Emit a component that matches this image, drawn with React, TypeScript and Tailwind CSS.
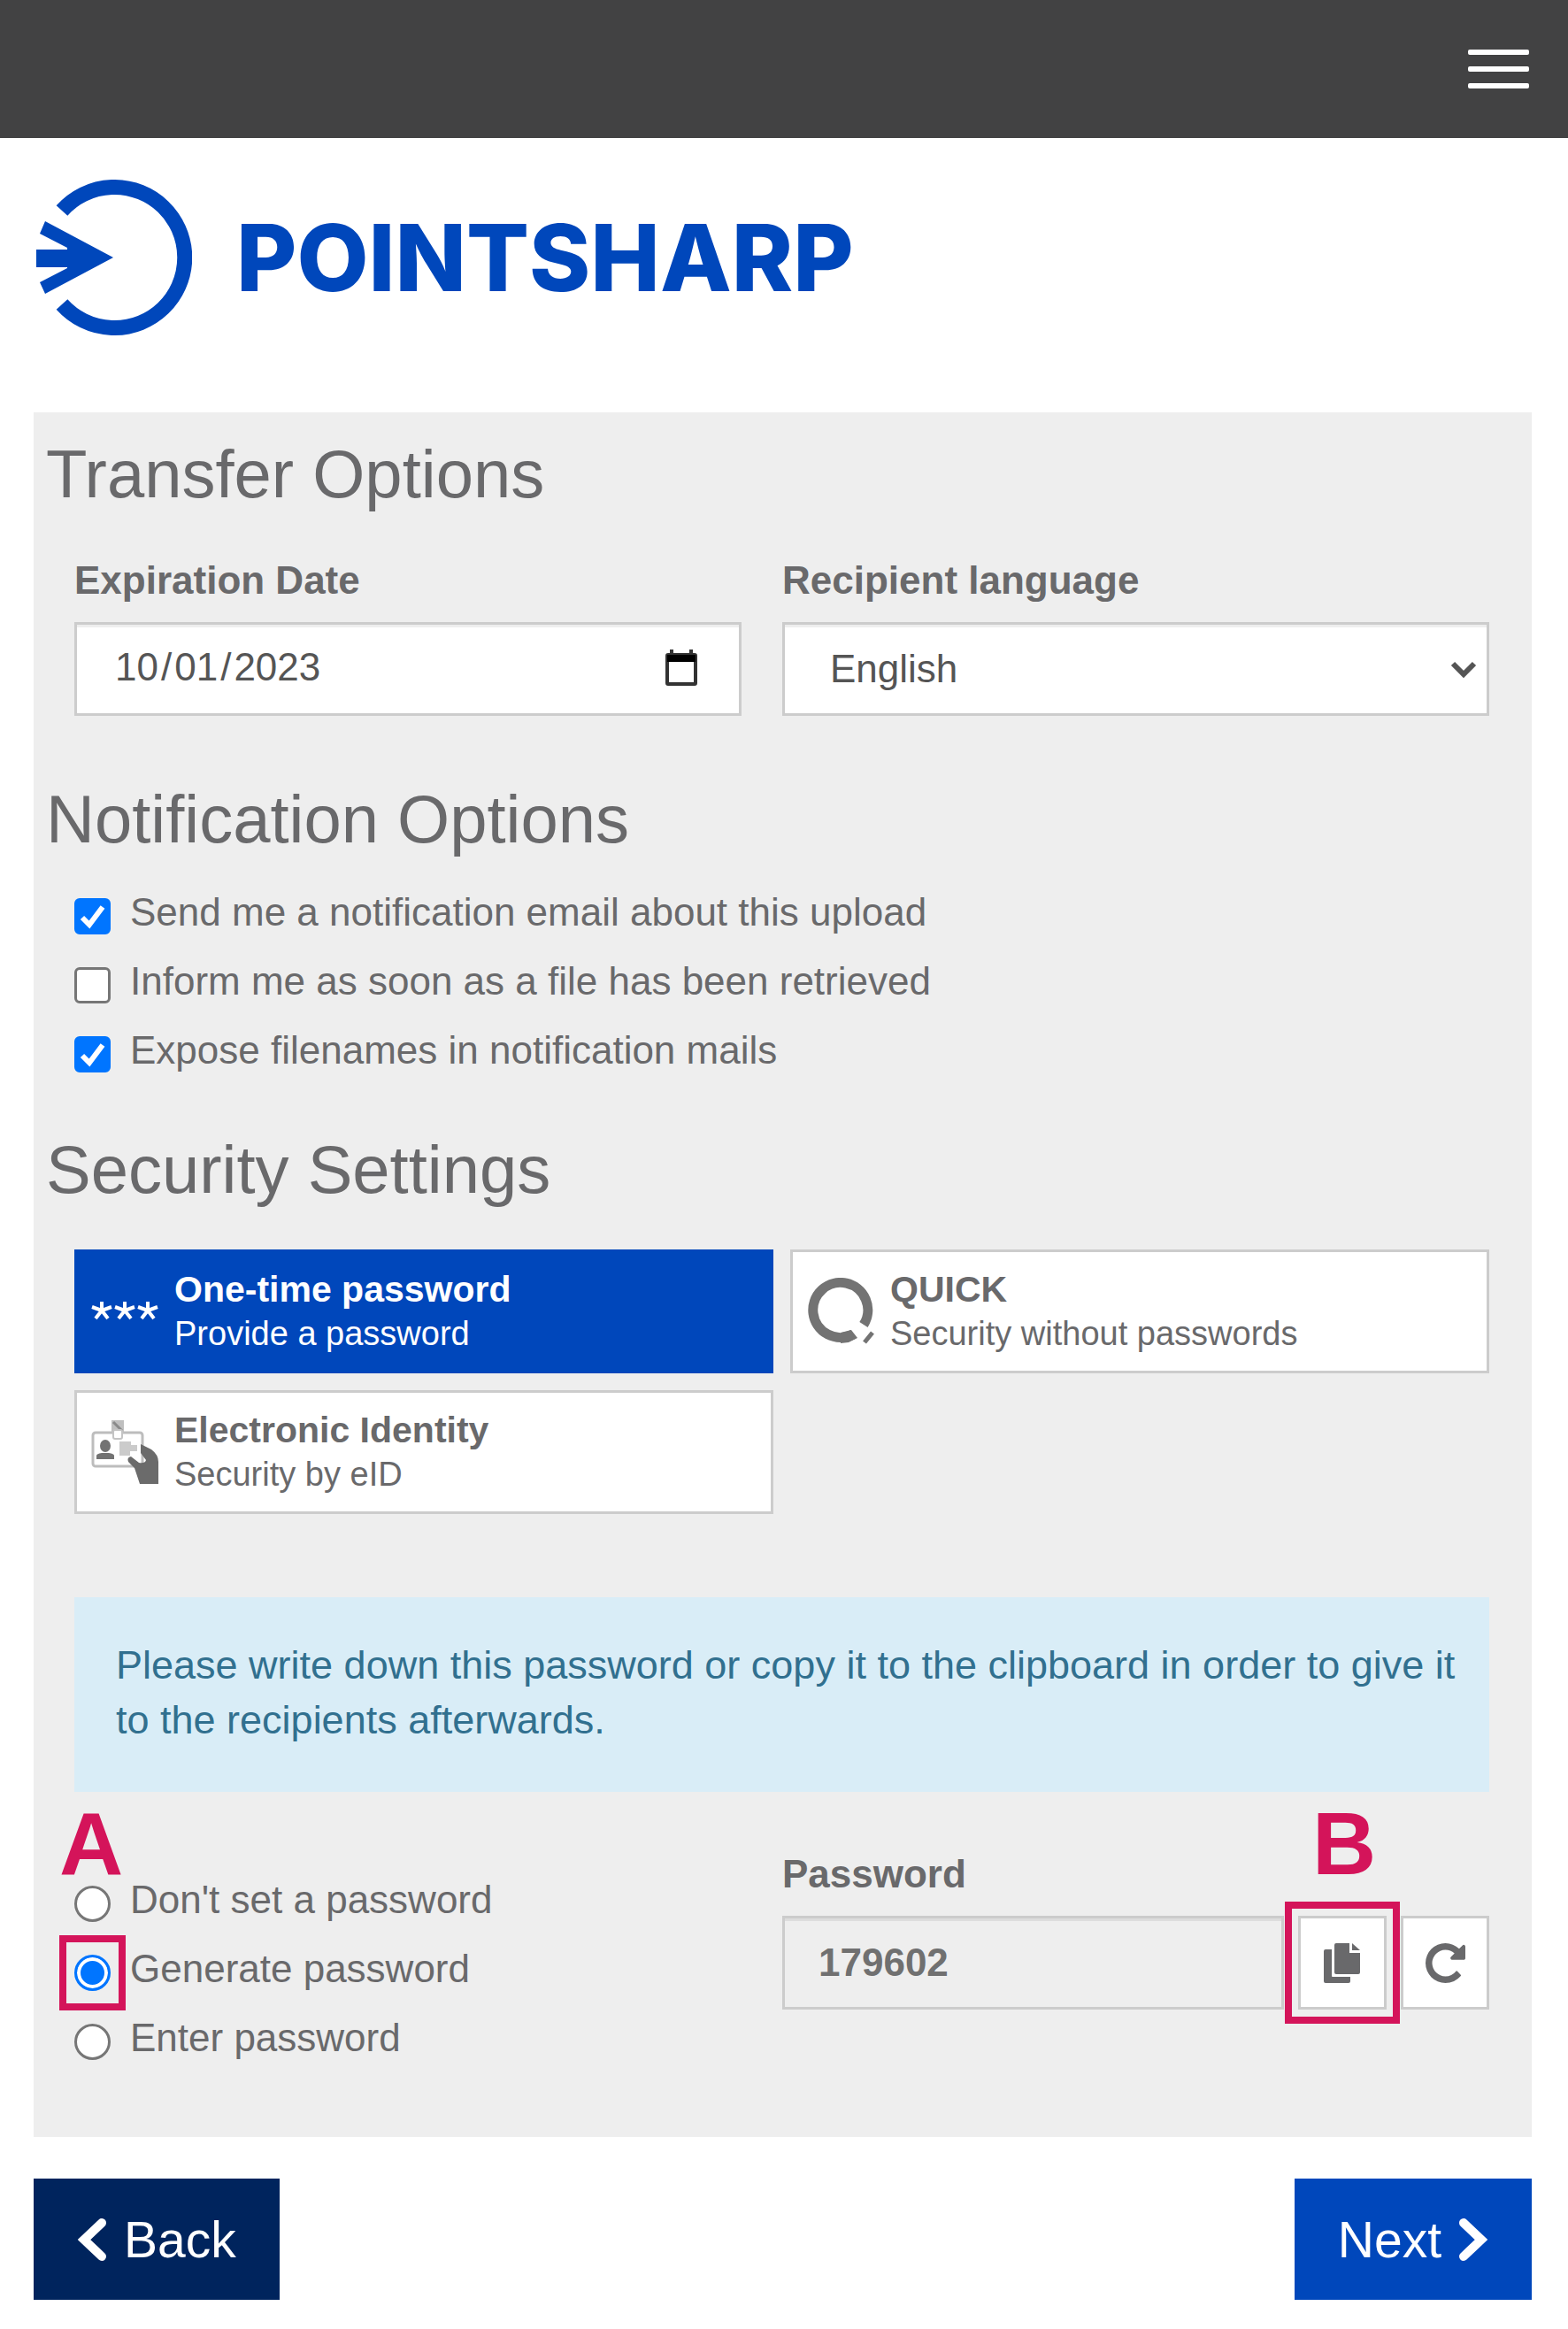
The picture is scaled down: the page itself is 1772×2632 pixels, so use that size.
import { useState } from "react";

const notifications = [
  { id: "notify-upload", label: "Send me a notification email about this upload", on: true },
  { id: "notify-retrieved", label: "Inform me as soon as a file has been retrieved", on: false },
  { id: "expose-filenames", label: "Expose filenames in notification mails", on: true },
];

const methods = [
  { id: "otp", title: "One-time password", text: "Provide a password", Icon: StarsIcon },
  { id: "quick", title: "QUICK", text: "Security without passwords", Icon: QuickIcon },
  { id: "eid", title: "Electronic Identity", text: "Security by eID", Icon: EidIcon },
];

const passwordModes = [
  { id: "none", label: "Don't set a password" },
  { id: "generate", label: "Generate password" },
  { id: "enter", label: "Enter password" },
];

function LogoMark() {
  return (
    <svg viewBox="0 0 176 176" className="w-[176px] h-[176px] shrink-0" fill="none" aria-hidden="true">
      <path d="M29 35 A79.500 79.500 0 1 1 29 141" stroke="#0047bb" strokeWidth="17" />
      <path
        d="M10 47 L87 88 L10 129 L4 116 L35 100 V99 H0 V79 H35 V77 L4 61 Z"
        fill="#0047bb"
      />
    </svg>
  );
}

function StarsIcon() {
  return (
    <svg viewBox="0 0 76 76" className="w-[76px] h-[76px]" stroke="currentColor" strokeWidth="4" fill="none" aria-hidden="true">
      {[12, 38, 64].map((x) => (
        <path key={x} d={`M${x} 37V27M${x} 37L${x - 11} 33M${x} 37L${x + 11} 33M${x} 37L${x - 7} 46M${x} 37L${x + 7} 46`} />
      ))}
    </svg>
  );
}

function QuickIcon() {
  return (
    <svg viewBox="0 0 76 76" className="w-[76px] h-[76px]" fill="none" aria-hidden="true">
      <path d="M64 53 A31 31 0 1 0 52 64" stroke="#737373" strokeWidth="11" />
      <path d="M38 62 L50 59 L57 68 L47 73 L38 74 Z" fill="#737373" />
      <path d="M74 62 L65 73" stroke="#737373" strokeWidth="5" />
    </svg>
  );
}

function EidIcon() {
  return (
    <svg viewBox="0 0 76 76" className="w-[76px] h-[76px]" fill="none" aria-hidden="true">
      <rect x="2" y="16" width="56" height="38" rx="3" stroke="#bdbdbd" strokeWidth="3" />
      <rect x="23" y="2" width="14" height="14" fill="#bfbfbf" />
      <path d="M25 4l10 10" stroke="#8a8a8a" strokeWidth="3" />
      <rect x="25" y="13" width="10" height="10" rx="2" fill="#fff" stroke="#c4c4c4" strokeWidth="2" />
      <ellipse cx="16" cy="31" rx="6" ry="7" fill="#737373" />
      <path d="M6 46V42q0-2 6-3h8q6 1 6 3v4z" fill="#737373" />
      <path d="M32 26h13v4h7v7H44v5H32z" fill="#cbcbcb" />
      <path d="M56 29l12 6q8 6 8 14v25H55L49 56 42 49q-2-5 3-6l9 7q7 1 8-3l-6-8z" fill="#6b6b6b" />
    </svg>
  );
}

function CalendarIcon() {
  return (
    <svg viewBox="0 0 36 41" className="w-[36px] h-[41px]" aria-hidden="true">
      <path d="M7 0v7M29 0v7" stroke="#333" strokeWidth="4" />
      <rect x="2" y="6" width="32" height="33" rx="1" fill="none" stroke="#333" strokeWidth="4" />
      <path d="M2 6h32v8H2z" fill="#000" />
    </svg>
  );
}

function ChevronDown() {
  return (
    <svg viewBox="0 0 30 20" className="w-[30px] h-[20px]" fill="none" aria-hidden="true">
      <path d="M3 3l12 12L27 3" stroke="#555" strokeWidth="6" />
    </svg>
  );
}

function CopyIcon() {
  return (
    <svg viewBox="0 0 44 46" className="w-[44px] h-[46px]" fill="currentColor" aria-hidden="true">
      <path d="M3 8h7v30q0 1 1 1h20v5q0 2-2 2H3q-2 0-2-2V10q0-2 2-2z" />
      <path d="M15 1h15v11h12v22q0 2-2 2H15q-2 0-2-2V3q0-2 2-2z" />
      <path d="M33 1l9 8h-9z" />
    </svg>
  );
}

function RepeatIcon() {
  return (
    <svg viewBox="0 128 1536 1536" className="w-[45px] h-[45px]" fill="currentColor" aria-hidden="true">
      <path d="M1536 256v448q0 26-19 45t-45 19h-448q-42 0-59-40-17-39 14-69l138-138q-148-137-349-137-104 0-198.500 40.500t-163.500 109.500-109.500 163.500-40.500 198.500 40.500 198.500 109.500 163.500 163.500 109.500 198.500 40.500q119 0 225-52t179-147q7-10 23-12 15 0 25 9l137 138q9 8 9.500 20.500t-7.500 22.500q-109 132-264 204.500t-327 72.500q-156 0-298-61t-245-164-164-245-61-298 61-298 164-245 245-164 298-61q147 0 284.500 55.500t244.500 156.500l130-129q29-31 70-14 39 17 39 59z" />
    </svg>
  );
}

function Arrow({ left = false }: { left?: boolean }) {
  return (
    <svg viewBox="0 0 34 50" className="w-[34px] h-[50px]" fill="none" aria-hidden="true">
      <path
        d={left ? "M28 6L8 25l20 19" : "M6 6l20 19L6 44"}
        stroke="currentColor"
        strokeWidth="10"
        strokeLinecap="round"
      />
    </svg>
  );
}

function Heading({ children }: { children: string }) {
  return <h2 className="pl-[14px] text-[76px] leading-[84px]">{children}</h2>;
}

export default function App() {
  const [checked, setChecked] = useState(notifications.map((n) => n.on));
  const [method, setMethod] = useState("otp");
  const [mode, setMode] = useState("generate");
  const [date, setDate] = useState("2023-10-01");

  return (
    <div
      className="bg-white text-[#69696b] text-[44px] leading-[62px]"
      style={{ fontFamily: '"Liberation Sans", Arial, sans-serif' }}
    >
      <header className="h-[156px] bg-[#424243] flex items-center justify-end pr-[44px]">
        <button aria-label="Open menu" className="flex flex-col gap-[13px] w-[69px]">
          <span className="block h-[6px] w-full rounded-[2px] bg-white" />
          <span className="block h-[6px] w-full rounded-[2px] bg-white" />
          <span className="block h-[6px] w-full rounded-[2px] bg-white" />
        </button>
      </header>

      <main className="pl-[38px] pr-[41px] pt-[47px] pb-[32px]">
        {/* Brand */}
        <a href="#" className="flex items-center pl-[3px]">
          <LogoMark />
          <span
            className="pl-[50px] text-[105px] leading-[176px] font-extrabold text-[#0047bb]"
            style={{ fontFamily: "Inter, sans-serif" }}
          >
            POINTSHARP
          </span>
        </a>

        <div className="mt-[87px] bg-[#eee] pt-[28px] pb-[81px]">
          <Heading>Transfer Options</Heading>
          <div className="grid grid-cols-[754fr_799fr] gap-[46px] pl-[46px] pr-[48px] mt-[47px]">
            <div className="min-w-0">
              <label htmlFor="expires" className="block font-bold">Expiration Date</label>
              <div className="relative mt-[16px]">
                <input
                  id="expires"
                  type="date"
                  value={date}
                  onChange={(e) => setDate(e.target.value)}
                  className="block w-full h-[106px] pl-[42px] pr-[48px] pb-[4px] bg-white border-[3px] border-[#ccc] shadow-[inset_0_3px_0_#eee] text-[#555] [&::-webkit-calendar-picker-indicator]:opacity-0 [&::-webkit-datetime-edit-text]:px-[2px]"
                />
                <span className="absolute right-[50px] top-[31px] pointer-events-none">
                  <CalendarIcon />
                </span>
              </div>
            </div>
            <div className="min-w-0">
              <label htmlFor="language" className="block font-bold">Recipient language</label>
              <div className="relative mt-[16px]">
                <select
                  id="language"
                  className="block w-full h-[106px] pl-[51px] pr-[60px] appearance-none bg-white border-[3px] border-[#ccc] shadow-[inset_0_3px_0_#eee] text-[#555]"
                >
                  <option>English</option>
                  <option>German</option>
                </select>
                <span className="absolute right-[14px] top-[44px] pointer-events-none">
                  <ChevronDown />
                </span>
              </div>
            </div>
          </div>

          <div className="mt-[75px]">
            <Heading>Notification Options</Heading>
            <div className="flex flex-col gap-[16px] pl-[46px] mt-[32px]">
              {notifications.map((n, i) => (
                <label key={n.id} htmlFor={n.id} className="flex items-start gap-[22px]">
                  <span className="relative mt-[15px] shrink-0">
                    <input
                      id={n.id}
                      type="checkbox"
                      checked={checked[i]}
                      onChange={() => setChecked(checked.map((c, j) => (j === i ? !c : c)))}
                      className="block w-[41px] h-[41px] appearance-none rounded-[6px] border-[3px] border-[#767676] bg-white checked:border-[#0075ff] checked:bg-[#0075ff]"
                    />
                    {checked[i] && (
                      <svg viewBox="0 0 41 41" className="absolute inset-0 w-[41px] h-[41px] pointer-events-none" fill="none">
                        <path d="M9 22l8 8L32 10" stroke="#fff" strokeWidth="6" />
                      </svg>
                    )}
                  </span>
                  {n.label}
                </label>
              ))}
            </div>
          </div>

          <div className="mt-[62px]">
            <Heading>Security Settings</Heading>
            <div className="grid grid-cols-2 gap-[19px] pl-[46px] pr-[48px] mt-[48px]">
              {methods.map(({ id, title, text, Icon }) => (
                <button
                  key={id}
                  onClick={() => setMethod(id)}
                  aria-pressed={method === id}
                  className={`flex items-center gap-[18px] h-[140px] pl-[16px] border-[3px] text-left ${
                    method === id ? "bg-[#0047bb] border-[#0047bb] text-white" : "bg-white border-[#ccc]"
                  }`}
                >
                  <Icon />
                  <span className="flex flex-col">
                    <span className="text-[41px] leading-[50px] font-bold">{title}</span>
                    <span className="text-[38px] leading-[50px]">{text}</span>
                  </span>
                </button>
              ))}
            </div>
          </div>

          <div className="pl-[46px] pr-[48px]">
            <p role="status" className="mt-[94px] bg-[#d9edf7] text-[#31708f] text-[45px] pl-[47px] pr-[20px] pt-[46px] pb-[50px]">
              Please write down this password or copy it to the clipboard in order to give it to the recipients afterwards.
            </p>

            <div className="grid grid-cols-[754fr_799fr] gap-[46px] mt-[62px]">
              <div className="min-w-0 flex flex-col gap-[16px] pt-[29px]">
                {passwordModes.map((m) => (
                  <label key={m.id} htmlFor={m.id} className="flex items-start gap-[22px]">
                    <span className="relative mt-[15px] shrink-0">
                      <input
                        id={m.id}
                        type="radio"
                        name="password-mode"
                        checked={mode === m.id}
                        onChange={() => setMode(m.id)}
                        className="block w-[41px] h-[41px] appearance-none rounded-full border-[3px] border-[#767676] bg-white checked:border-[#0075ff] checked:bg-[#0075ff] checked:shadow-[inset_0_0_0_4px_#fff]"
                      />
                      {m.id === "none" && (
                        <span className="absolute left-[-17px] top-[-97px] text-[100px] leading-[100px] font-bold text-[#d4145a]">A</span>
                      )}
                      {m.id === "generate" && (
                        <span className="absolute inset-x-[-17px] inset-y-[-22px] border-[8px] border-[#d4145a] pointer-events-none" />
                      )}
                    </span>
                    {m.label}
                  </label>
                ))}
              </div>

              <div className="min-w-0">
                <label htmlFor="password" className="block font-bold">Password</label>
                <div className="flex mt-[16px]">
                  <input
                    id="password"
                    type="text"
                    readOnly
                    value="179602"
                    className="flex-1 min-w-0 h-[106px] pl-[38px] bg-[#eee] border-[3px] border-[#ccc] shadow-[inset_0_3px_0_#ddd] font-bold text-[#707070]"
                  />
                  <div className="relative ml-[16px]">
                    <button
                      aria-label="Copy password"
                      className="w-[100px] h-[106px] flex items-center justify-center bg-white border-[3px] border-[#ccc]"
                    >
                      <CopyIcon />
                    </button>
                    <span className="absolute inset-x-[-15px] inset-y-[-16px] border-[8px] border-[#d4145a] pointer-events-none" />
                    <span className="absolute left-[16px] top-[-132px] text-[100px] leading-[100px] font-bold text-[#d4145a]">B</span>
                  </div>
                  <button
                    aria-label="Generate new password"
                    className="ml-[16px] w-[100px] h-[106px] flex items-center justify-center bg-white border-[3px] border-[#ccc]"
                  >
                    <RepeatIcon />
                  </button>
                </div>
              </div>
            </div>
          </div>
        </div>

        <div className="flex justify-between mt-[47px] text-[57px] text-white">
          <button className="h-[137px] px-[49px] flex items-center gap-[19px] bg-[#00245d]">
            <Arrow left />
            Back
          </button>
          <button className="h-[137px] px-[49px] flex items-center gap-[19px] bg-[#0047bb]">
            Next
            <Arrow />
          </button>
        </div>
      </main>
    </div>
  );
}
